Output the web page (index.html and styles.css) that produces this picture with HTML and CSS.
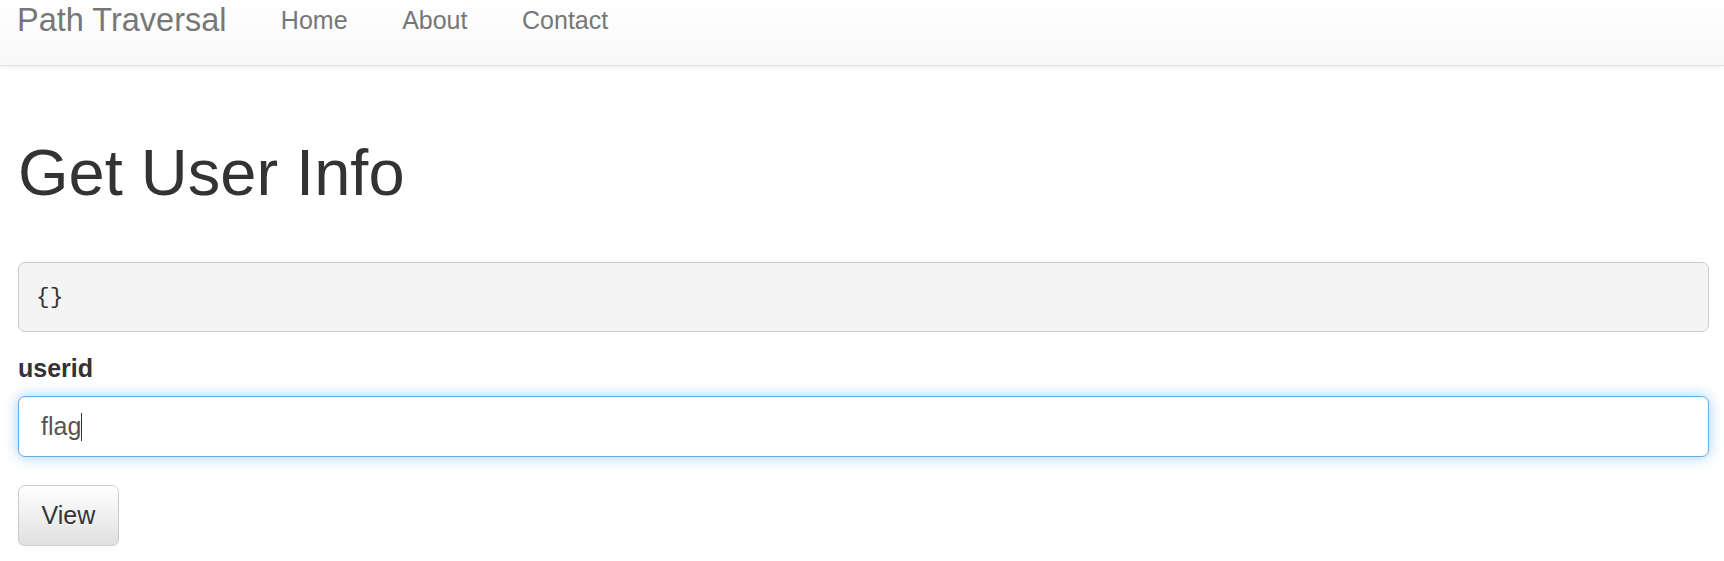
FILE: index.html
```html
<!DOCTYPE html>
<html lang="en">
<head>
<meta charset="utf-8">
<title>Path Traversal</title>
<link rel="stylesheet" href="styles.css">
</head>
<body>
<nav class="navbar">
  <a class="brand" href="#">Path Traversal</a>
  <ul class="nav">
    <li><a href="#">Home</a></li>
    <li><a href="#">About</a></li>
    <li><a href="#">Contact</a></li>
  </ul>
</nav>
<main class="container">
  <h1 class="title">Get User Info</h1>
  <pre class="result">{}</pre>
  <form class="form">
    <div class="form-group">
      <label class="label" for="userid">userid</label>
      <div class="input-wrap">
        <input class="input" id="userid" name="userid" type="text" value="flag">
        <span class="caret"></span>
      </div>
    </div>
    <button class="btn" type="button">View</button>
  </form>
</main>
</body>
</html>
```

FILE: styles.css
```css
html, body {
  margin: 0;
  padding: 0;
  background: #fff;
}
body {
  font-family: "Liberation Sans", Arial, Helvetica, sans-serif;
  color: #333;
  font-size: 25px;
  line-height: 35px;
}
.navbar {
  display: flex;
  align-items: flex-start;
  padding-top: 3px;
  box-sizing: border-box;
  height: 66px;
  border-bottom: 1px solid #e2e2e2;
  background: linear-gradient(to bottom, #ffffff 0%, #f8f8f8 100%);
  box-shadow: 0 1px 5px rgba(0, 0, 0, 0.075);
}
.brand {
  padding-left: 17px;
  margin-right: 27px;
  font-size: 32.5px;
  line-height: 35px;
  color: #777;
  text-decoration: none;
}
.nav {
  display: flex;
  margin: 0;
  padding: 0;
  list-style: none;
}
.nav a {
  display: block;
  padding: 0 27.3px;
  font-size: 25px;
  line-height: 35px;
  color: #777;
  text-decoration: none;
}
.container {
  padding: 0 15px 0 18px;
}
.title {
  margin: 71px 0 54px;
  font-size: 65px;
  font-weight: 500;
  line-height: 71px;
  color: #333;
}
.result {
  margin: 0 0 19px;
  padding: 17px 17px;
  height: 70px;
  box-sizing: border-box;
  font-family: "Liberation Mono", "DejaVu Sans Mono", monospace;
  font-size: 22.75px;
  line-height: 35px;
  color: #333;
  background: #f4f4f4;
  border: 1px solid #ccc;
  border-radius: 7px;
}
.form-group {
  margin-bottom: 28px;
}
.label {
  display: inline-block;
  margin-bottom: 10px;
  font-weight: 700;
}
.input-wrap {
  position: relative;
}
.input {
  display: block;
  width: 100%;
  height: 61px;
  box-sizing: border-box;
  padding: 0 22px;
  font-family: inherit;
  font-size: 25px;
  color: #555;
  background: #fff;
  border: 1px solid #66afe9;
  border-radius: 7px;
  outline: 0;
  box-shadow: inset 0 1px 1px rgba(0, 0, 0, 0.075), 0 0 14px rgba(102, 175, 233, 0.6);
}
.caret {
  position: absolute;
  left: 63px;
  top: 17px;
  width: 1px;
  height: 28px;
  background: #333;
}
.btn {
  display: inline-block;
  height: 61px;
  box-sizing: border-box;
  padding: 0 22.5px;
  font-family: inherit;
  font-size: 25px;
  color: #333;
  text-shadow: 0 1px 0 #fff;
  background: linear-gradient(to bottom, #ffffff 0%, #e0e0e0 100%);
  border: 1px solid #ccc;
  border-radius: 7px;
  box-shadow: inset 0 1px 0 rgba(255, 255, 255, 0.15), 0 1px 1px rgba(0, 0, 0, 0.075);
  cursor: pointer;
}
```
